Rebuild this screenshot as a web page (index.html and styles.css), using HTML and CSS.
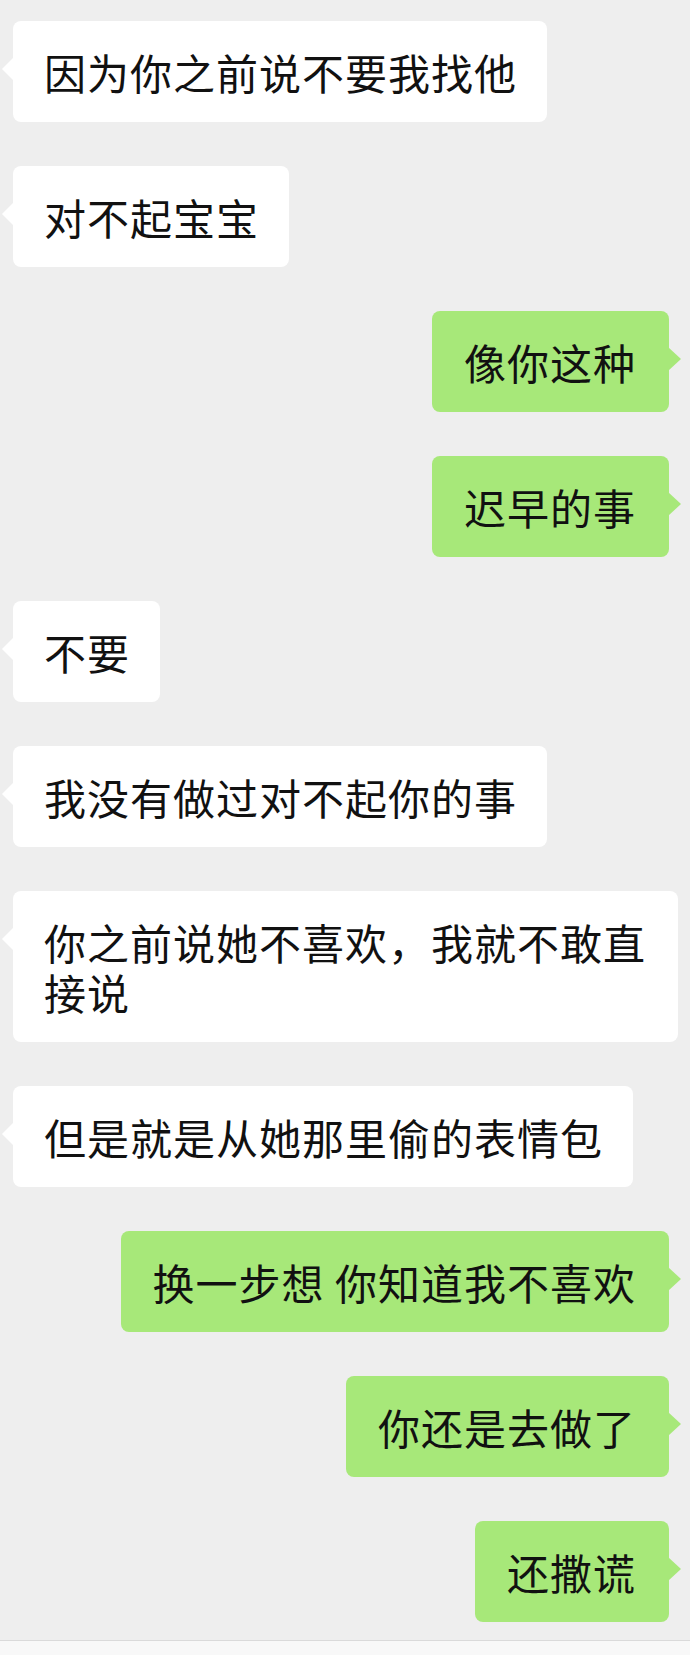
FILE: index.html
```html
<!DOCTYPE html>
<html lang="zh-CN">
<head>
<meta charset="utf-8">
<title>聊天记录</title>
<link rel="stylesheet" href="styles.css">
</head>
<body>
<div class="chat">
  <div class="row left"><div class="bubble">因为你之前说不要我找他</div></div>
  <div class="row left"><div class="bubble">对不起宝宝</div></div>
  <div class="row right"><div class="bubble">像你这种</div></div>
  <div class="row right"><div class="bubble">迟早的事</div></div>
  <div class="row left"><div class="bubble">不要</div></div>
  <div class="row left"><div class="bubble">我没有做过对不起你的事</div></div>
  <div class="row left"><div class="bubble">你之前说她不喜欢，我就不敢直接说</div></div>
  <div class="row left"><div class="bubble">但是就是从她那里偷的表情包</div></div>
  <div class="row right"><div class="bubble">换一步想 你知道我不喜欢</div></div>
  <div class="row right"><div class="bubble">你还是去做了</div></div>
  <div class="row right"><div class="bubble">还撒谎</div></div>
</div>
<div class="footer"></div>
</body>
</html>
```
FILE: styles.css
```css
html, body {
  margin: 0;
  padding: 0;
}
body {
  background: #eeeeee;
  font-family: "Noto Sans CJK SC", "Noto Sans", sans-serif;
  color: #111111;
  width: 690px;
  height: 1655px;
  overflow: hidden;
  display: flex;
  flex-direction: column;
}
.chat {
  display: flex;
  flex-direction: column;
  gap: 44px;
  padding: 21px 12px 0 13px;
}
.row {
  display: flex;
}
.row.left {
  justify-content: flex-start;
}
.row.right {
  justify-content: flex-end;
  padding-right: 9px;
}
.bubble {
  position: relative;
  box-sizing: border-box;
  max-width: 665px;
  padding: 26px 30px 25px 31px;
  font-size: 42px;
  line-height: 50px;
  letter-spacing: 1px;
  border-radius: 8px;
  background: #ffffff;
}
.row.right .bubble {
  background: #a7e879;
  padding: 26px 33px 25px 32px;
}
.bubble::before {
  content: "";
  position: absolute;
  top: 36px;
  width: 0;
  height: 0;
  border-top: 12px solid transparent;
  border-bottom: 12px solid transparent;
}
.row.left .bubble::before {
  left: -11px;
  border-right: 12px solid #ffffff;
}
.row.right .bubble::before {
  right: -12px;
  border-left: 13px solid #a7e879;
}
.footer {
  margin-top: auto;
  height: 14px;
  border-top: 1px solid #dadada;
  background: #f8f8f8;
}
```
